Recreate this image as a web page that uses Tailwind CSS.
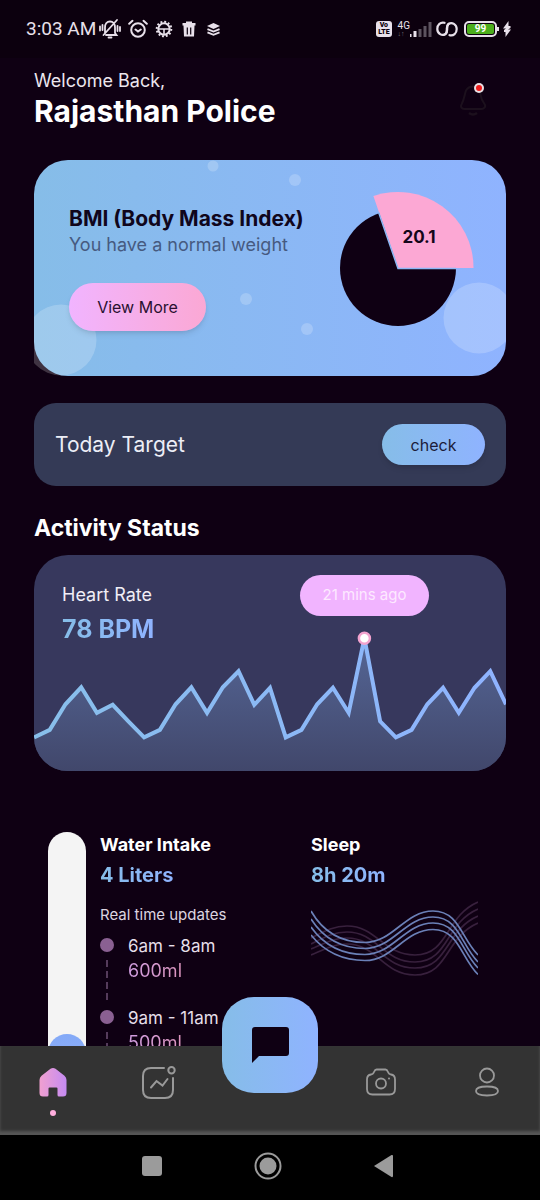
<!DOCTYPE html>
<html lang="en">
<head>
<meta charset="utf-8">
<meta name="viewport" content="width=device-width, initial-scale=1">
<title>Activity</title>
<script src="https://cdn.jsdelivr.net/npm/@tailwindcss/browser@4"></script>
</head>
<body class="flex h-screen flex-col overflow-hidden bg-[#0f0013] font-['Inter',sans-serif] text-white">

<!-- Device status bar -->
<div class="flex h-[58px] shrink-0 items-center justify-between bg-[#0c000e] pr-[29px] pl-[26px] font-['Roboto',sans-serif] text-[#e8e0ea]">
  <div class="flex items-center gap-[7px]">
    <span class="text-[19px] leading-6">3:03 AM</span>
    <svg class="-ml-1 h-[22px] w-[22px]" viewBox="0 0 22 22" fill="none" stroke="currentColor" stroke-width="1.8" stroke-linecap="round"><path d="M6 15V9.500C6 6 8 3.500 11 3.500s5 2.500 5 6V15l1.500 2H7M4.500 17 18 2M9.500 19.500h3M1 8.500v4M3.500 7v5M18.500 8v5M21 9v4"/></svg>
    <svg class="h-5 w-5" viewBox="0 0 20 20" fill="none" stroke="currentColor" stroke-width="2" stroke-linecap="round"><circle cx="10" cy="11" r="6.800"/><path d="m1.200 4.800 3.300-3M18.800 4.800l-3.300-3M7.500 10.500 10 12.500l2.800-2"/></svg>
    <svg class="h-[18px] w-[18px]" viewBox="0 0 18 18" fill="none" stroke="currentColor"><circle cx="9" cy="9" r="7.300" stroke-width="2" stroke-dasharray="1.900 1.920"/><circle cx="9" cy="9" r="5.700" stroke-width="2"/><path d="M3 9h12M9 9v6" stroke-width="1.600"/></svg>
    <svg class="h-[18px] w-[18px]" viewBox="0 0 18 18" fill="currentColor"><path d="M2.500 3H6V1.500h6V3h3.500v2.500h-13zM3.500 5.500h11l-.500 11H4z"/><path d="M7.300 7.500v7M10.700 7.500v7" stroke="#0c000e" stroke-width="1.200"/></svg>
    <svg class="ml-[2px] h-[13px] w-[13px]" viewBox="0 0 14 14" fill="currentColor"><path d="m7 0 7 3.200-7 3.200-7-3.200z"/><path d="m.500 6.500 6.500 2.700 6.500-2.700M.500 10l6.500 2.700 6.500-2.700" fill="none" stroke="currentColor" stroke-width="2"/></svg>
  </div>
  <div class="flex items-center">
    <span class="rounded-[3px] bg-[#e8e0ea] px-[2px] py-[1px] text-center text-[7px] leading-[7px] font-black text-[#0c000e]">Vo<br>LTE</span>
    <div class="ml-[6px] flex flex-col">
      <span class="text-[10px] leading-[10px]">4G</span>
      <span class="text-[7px] leading-[7px] text-[#77707a]">↓↑</span>
    </div>
    <svg class="h-4 w-[22px]" viewBox="0 0 22 16" stroke-width="3"><path d="M0 16v-3M5 16v-6" stroke="#e8e0ea"/><path d="M10 16V8M15 16V5M20 16V1" stroke="#5c535f"/></svg>
    <svg class="ml-1 h-4 w-[22px]" viewBox="0 0 22 16" fill="none" stroke="currentColor" stroke-width="2.200" stroke-linecap="round"><path d="M8.500 1.800C4.500 .800 1.300 3.500 1.300 8S6 15.500 9.500 13c3.500-2.500 0-7 3-10"/><path d="M13.500 14.200c4 1 7.200-1.700 7.200-6.200S16 .500 12.500 3c-3.500 2.500 0 7-3 10"/></svg>
    <div class="ml-[6px] flex h-4 w-[33px] items-center rounded-[5px] border-2 border-[#e8e0ea] p-[1px]">
      <span class="w-full rounded-[2px] bg-[#4cae1c] text-center text-[10px] leading-[10px] font-bold text-white">99</span>
    </div>
    <span class="h-1 w-[2px] bg-[#e8e0ea]"></span>
    <svg class="ml-1 h-4 w-2" viewBox="0 0 8 16" fill="currentColor"><path d="M5.500 0 0 7.500h3L1 9v2h1.500V16L8 8.500H5L7.500 7V5H5.500z"/></svg>
  </div>
</div>

<main class="min-h-0 flex-1 overflow-hidden px-[34px]">
  <header class="flex items-center justify-between pt-[11px]">
    <div>
      <p class="text-[18px] leading-6 text-[#ece6ee]">Welcome Back,</p>
      <h1 class="text-[30px] leading-9 font-bold">Rajasthan Police</h1>
    </div>
    <button type="button" aria-label="Notifications" class="mr-[18px]">
      <svg class="h-9 w-[30px]" viewBox="0 0 30 36" fill="none"><path d="M8 9.500C9.500 7 12 5.500 15 5.500s6 2 7 6c.700 4 1 7 4.500 11.500 2 3-1 5-3 5h-17c-3 0-4.500-2.500-2.800-5C6 19 6.500 13.500 8 9.500z" stroke="#1c101d" stroke-width="2"/><path d="M11 32q4 3 8 0" stroke="#1c101d" stroke-width="2.500"/><circle cx="21" cy="7" r="5" fill="#eadfe4"/><circle cx="21" cy="7" r="3" fill="#ee1c1c"/></svg>
    </button>
  </header>

  <!-- Body mass card -->
  <section class="mt-[31px] grid h-[216px] rounded-[34px] bg-linear-to-r from-[#86bde8] to-[#8fb3ff]">
    <svg class="col-start-1 row-start-1 h-full w-full overflow-hidden" viewBox="0 0 472 216" preserveAspectRatio="none" fill="#fff" fill-opacity=".2"><circle cx="179" cy="6" r="5.500"/><circle cx="261" cy="20" r="6"/><circle cx="212" cy="139" r="6"/><circle cx="273" cy="169" r="6"/><circle cx="27" cy="180" r="35.500"/><circle cx="445" cy="158" r="35.500"/></svg>
    <div class="col-start-1 row-start-1 flex justify-between pr-8 pl-[35px]">
      <div class="pt-[46px]">
        <h2 class="text-[21px] leading-[26px] font-bold text-[#10061c]">BMI (Body Mass Index)</h2>
        <p class="text-[18px] leading-[26px] text-[#465a80]">You have a normal weight</p>
        <button type="button" class="mt-[25px] h-12 w-[137px] rounded-full bg-linear-to-r from-[#f1b4ff] to-[#fba8d4] text-[16px] text-[#2a1030] shadow-md">View More</button>
      </div>
      <svg class="mt-[31px] h-[136px] w-[135px] shrink-0" viewBox="0 0 135 136" role="img" aria-label="BMI 20.1"><circle cx="59" cy="77" r="58" fill="#0f0013"/><path d="M59 77H134.500A75.500 75.500 0 0 0 34.400 5.100z" fill="#fca8d4"/><path d="M117 77.500H59L39.500 21" fill="none" stroke="#8cb8f6" stroke-width="1.500"/><text x="80" y="52" text-anchor="middle" class="fill-[#14061a] text-[17px] font-bold">20.1</text></svg>
    </div>
  </section>

  <section class="mt-[27px] flex h-[83px] items-center justify-between rounded-[22px] bg-[#343a56] px-[21px]">
    <h2 class="text-[21px] leading-7 text-[#eceef6]">Today Target</h2>
    <button type="button" class="h-[41px] w-[103px] rounded-full bg-linear-to-r from-[#86bde8] to-[#8fb3ff] text-[16px] text-[#1c1c3a] shadow-md">check</button>
  </section>

  <h2 class="mt-[26px] text-[23px] leading-8 font-bold">Activity Status</h2>

  <section class="mt-[11px] grid overflow-hidden rounded-[34px] bg-[#37385d]">
    <svg class="col-start-1 row-start-1 block w-full" viewBox="0 0 471 216" fill="none" aria-hidden="true">
      <defs>
        <linearGradient id="area" x1="0" y1="83" x2="0" y2="216" gradientUnits="userSpaceOnUse"><stop stop-color="#556696"/><stop offset="1" stop-color="#41476b"/></linearGradient>
        <linearGradient id="line"><stop stop-color="#88bfea"/><stop offset="1" stop-color="#8fb3ff"/></linearGradient>
      </defs>
      <path fill="url(#area)" d="M0 182 15.700 174.500 31.400 149 47.100 132 62.800 157.500 78.500 149.500 94.200 166 109.900 182 125.600 174.500 141.300 149 157 132 172.700 157.500 188.400 132 204.100 116 219.800 149.500 235.500 132.500 251.200 182 266.900 174.500 282.600 149 298.300 132.500 314 157.500 329.700 83 345.400 166 361.100 182 376.800 174.500 392.500 149 408.200 132.500 423.900 157.500 439.600 132.500 455.300 116 471 149V216H0z"/>
      <path stroke="url(#line)" stroke-width="4" d="M0 182 15.700 174.500 31.400 149 47.100 132 62.800 157.500 78.500 149.500 94.200 166 109.900 182 125.600 174.500 141.300 149 157 132 172.700 157.500 188.400 132 204.100 116 219.800 149.500 235.500 132.500 251.200 182 266.900 174.500 282.600 149 298.300 132.500 314 157.500 329.700 83 345.400 166 361.100 182 376.800 174.500 392.500 149 408.200 132.500 423.900 157.500 439.600 132.500 455.300 116 471 149"/>
      <circle cx="329.700" cy="83" r="5.500" fill="#fff" stroke="#f3a3cf" stroke-width="2.500"/>
    </svg>
    <div class="col-start-1 row-start-1 flex items-start justify-between pr-[77px] pl-7">
      <div class="pt-[27px]">
        <h3 class="text-[18px] leading-[26px] text-[#f0eef6]">Heart Rate</h3>
        <p class="bg-linear-to-r from-[#86bde8] to-[#8fb3ff] bg-clip-text text-[25px] leading-[42px] font-bold text-transparent">78 BPM</p>
      </div>
      <span class="mt-5 flex h-[41px] w-[129px] items-center justify-center rounded-full bg-[#f1b4ff] text-[15px] text-[#fde9ff]">21 mins ago</span>
    </div>
  </section>

  <section class="mt-[61px] grid grid-cols-[263px_1fr] pl-[14px]">
    <div class="flex gap-[14px]">
      <div class="flex h-[330px] w-[38px] shrink-0 flex-col justify-end overflow-hidden rounded-full bg-[#f4f4f4]"><div class="h-32 rounded-full bg-linear-to-t from-[#b4c0fe] to-[#83a9f7]"></div></div>
      <div>
        <h3 class="text-[18px] leading-[26px] font-bold">Water Intake</h3>
        <p class="w-fit bg-linear-to-r from-[#86bde8] to-[#8fb3ff] bg-clip-text text-[20px] leading-[34px] font-bold text-transparent">4 Liters</p>
        <p class="mt-[11px] text-[15px] leading-6 text-[#dcd5e0]">Real time updates</p>
        <ul class="mt-[6px]">
          <li class="flex h-[72px] gap-[14px]">
            <span class="flex flex-col items-center pt-[5px]"><i class="h-[14px] w-[14px] rounded-full bg-[#8a6092]"></i><svg class="mt-2 h-[40px] w-[2px]" viewBox="0 0 2 40"><path d="M1 0V40" stroke="#6d4f74" stroke-width="1.500" stroke-dasharray="7 4"/></svg></span>
            <span><b class="block text-[17px] leading-[26px] font-normal text-[#e6dfe9]">6am - 8am</b><span class="bg-linear-to-r from-[#cf9de0] to-[#dc94bd] bg-clip-text text-[18px] leading-[24px] text-transparent">600ml</span></span>
          </li>
          <li class="flex h-[72px] gap-[14px]">
            <span class="flex flex-col items-center pt-[5px]"><i class="h-[14px] w-[14px] rounded-full bg-[#8a6092]"></i><svg class="mt-2 h-[40px] w-[2px]" viewBox="0 0 2 40"><path d="M1 0V40" stroke="#6d4f74" stroke-width="1.500" stroke-dasharray="7 4"/></svg></span>
            <span><b class="block text-[17px] leading-[26px] font-normal text-[#e6dfe9]">9am - 11am</b><span class="bg-linear-to-r from-[#cf9de0] to-[#dc94bd] bg-clip-text text-[18px] leading-[24px] text-transparent">500ml</span></span>
          </li>
        </ul>
      </div>
    </div>
    <div>
      <h3 class="text-[18px] leading-[26px] font-bold">Sleep</h3>
      <p class="w-fit bg-linear-to-r from-[#86bde8] to-[#8fb3ff] bg-clip-text text-[20px] leading-[34px] font-bold text-transparent">8h 20m</p>
      <svg class="mt-2 h-[78px] w-[167px]" viewBox="0 0 167 78" fill="none" stroke-width="1.700" aria-hidden="true">
        <g stroke="#38203d"><path d="M0 38C12 32 22 26 36 26 66 26 72 55 104 55 138 55 134 16 167 2"/><path d="M0 44C12 38 22 32 36 32 66 32 72 62 104 62 138 62 134 23 167 9"/><path d="M0 49C12 44 22 38 36 38 66 38 72 68 104 68 138 68 134 30 167 16"/><path d="M0 55C12 50 22 44 36 44 66 44 72 75 104 75 138 75 134 37 167 23"/></g>
        <g stroke="#6b80b8"><path d="M0 11C12 32 30 42.500 54 42.500 82 42.500 94 11 122 11 148 11 150 38 167 55"/><path d="M0 19C12 38 30 48.500 54 48.500 82 48.500 94 17 122 17 148 17 150 45 167 62"/><path d="M0 27C12 44 30 54.500 54 54.500 82 54.500 94 23 122 23 148 23 150 51 167 68"/><path d="M0 35C12 50 30 60.500 54 60.500 82 60.500 94 29.500 122 29.500 148 29.500 150 58 167 74.500"/></g>
      </svg>
    </div>
  </section>
</main>

<nav class="grid h-[89px] shrink-0 grid-cols-[106fr_106fr_116fr_106fr_106fr] border-b-2 border-[#555] bg-[#333] shadow-[inset_0_-2px_3px_#555]">
  <a href="#home" aria-label="Home" class="flex flex-col items-center pt-[21px]">
    <svg class="h-[30px] w-7" viewBox="0 0 28 30"><defs><linearGradient id="home"><stop stop-color="#f0a0d0"/><stop offset="1" stop-color="#c58bf2"/></linearGradient></defs><path fill="url(#home)" d="M11.500 1.800q2.500-1.800 5 0l9 7Q27.500 10.500 27.500 13v13q0 3.500-3.500 3.500h-4q-1.500 0-1.500-1.500v-6.500q0-1-1-1h-7q-1 0-1 1V28q0 1.500-1.500 1.500H4Q.500 29.500.500 26V13q0-2.500 2-4.200z"/></svg>
    <i class="mt-[13px] h-[6px] w-[6px] rounded-full bg-[#ffaedd]"></i>
  </a>
  <a href="#activity" aria-label="Activity" class="flex justify-center pt-5">
    <svg class="h-[34px] w-[34px]" viewBox="0 0 34 34" fill="none" stroke="#999" stroke-width="2" stroke-linecap="round"><path d="M22 2H9Q1 2 1 10v14q0 8 8 8h14q8 0 8-8V12M9 21.500l5.500-6.500 6 4.500 5-6.500"/><circle cx="29.500" cy="4.200" r="3.200"/></svg>
  </a>
  <div class="flex justify-center">
    <button type="button" aria-label="Messages" class="-mt-[49px] flex h-24 w-24 items-center justify-center rounded-[32px] bg-linear-to-r from-[#86bde8] to-[#8fb3ff]">
      <svg class="h-9 w-[37px]" viewBox="0 0 37 36" fill="#0f0013"><path d="M3 0h31q3 0 3 3v23q0 3-3 3H7l-7 7V3Q0 0 3 0z"/></svg>
    </button>
  </div>
  <a href="#camera" aria-label="Camera" class="flex justify-center pt-[22px]">
    <svg class="h-7 w-[30px]" viewBox="0 0 30 28" fill="none" stroke="#999" stroke-width="1.800"><path d="M10.500 1.500h9q1.500 0 2.500 2.500t3 2.500q4 .500 4 5V21q0 5.500-5.500 5.500h-17Q1 26.500 1 21v-9.500q0-4.500 4-5 2 0 3-2.500t2.500-2.500z"/><circle cx="15" cy="15.500" r="5"/><circle cx="23" cy="10.500" r="1" fill="#999" stroke="none"/></svg>
  </a>
  <a href="#profile" aria-label="Profile" class="flex justify-center pt-[21px]">
    <svg class="h-[30px] w-6" viewBox="0 0 24 30" fill="none" stroke="#999" stroke-width="1.800"><circle cx="12" cy="8.500" r="7"/><path d="M12 19.500c7 0 11 1.500 11 4.500s-4 4.500-11 4.500S1 27 1 24s4-4.500 11-4.500z"/></svg>
  </a>
</nav>

<!-- System navigation -->
<div class="flex h-[65px] shrink-0 items-center justify-center gap-[92px] bg-black pr-1 pb-1">
  <button type="button" aria-label="Recent apps" class="h-5 w-5 rounded-[3px] bg-[#9b9b9b]"></button>
  <button type="button" aria-label="Home screen"><svg class="h-7 w-7" viewBox="0 0 28 28"><circle cx="14" cy="14" r="12.500" fill="none" stroke="#9b9b9b" stroke-width="2"/><circle cx="14" cy="14" r="8.500" fill="#9b9b9b"/></svg></button>
  <button type="button" aria-label="Back"><svg class="h-6 w-5" viewBox="0 0 20 24"><path d="M0 12 17.500 1q1.500-.500 1.500 1v20q0 1.500-1.500 1z" fill="#9b9b9b"/></svg></button>
</div>
</body>
</html>
